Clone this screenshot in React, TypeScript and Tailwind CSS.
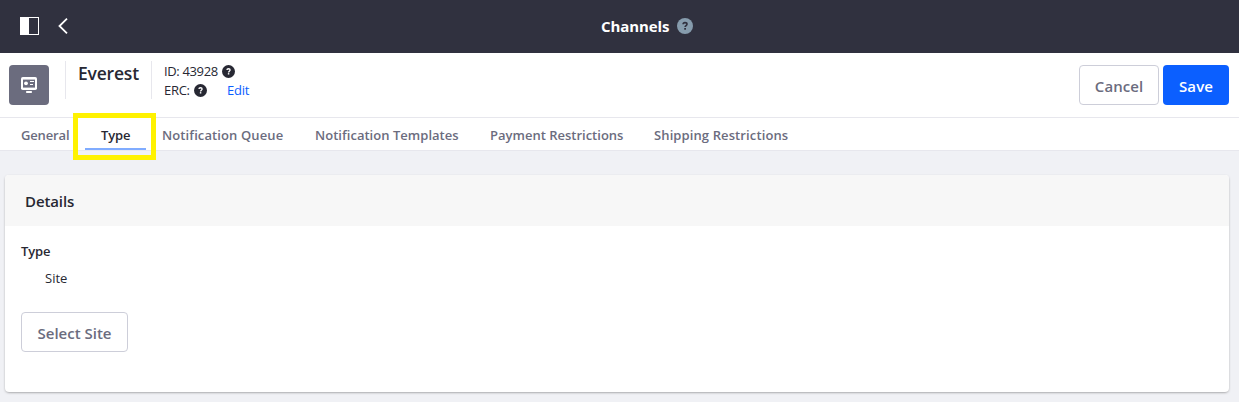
import React from "react";

type HelpProps = { className: string; mark: string };

function Help({ className, mark }: HelpProps) {
  return (
    <svg viewBox="0 0 16 16" className={className} aria-hidden="true">
      <circle cx="8" cy="8" r="8" fill="currentColor" />
      <path
        d="M6.1 6.3C6.1 5.2 6.9 4.6 8 4.6s2 .6 2 1.6c0 1.3-1.9 1.5-1.9 2.9"
        fill="none"
        stroke={mark}
        strokeWidth="1.6"
      />
      <rect x="7.2" y="10" width="1.8" height="1.7" fill={mark} />
    </svg>
  );
}

const tabs = [
  { label: "General", box: "w-[80px]", text: "tracking-[-0.15px]" },
  { label: "Type", box: "w-[61px]", text: "tracking-[-0.15px]" },
  { label: "Notification Queue", box: "w-[153px]", text: "tracking-[0.11px]" },
  { label: "Notification Templates", box: "w-[175px]", text: "tracking-[0.03px]" },
  { label: "Payment Restrictions", box: "w-[164px]", text: "" },
  { label: "Shipping Restrictions", box: "w-[166px]", text: "tracking-[0.11px]" },
];

export default function App() {
  return (
    <div className="flex h-[402px] w-[1239px] flex-col overflow-hidden bg-[#f0f1f5] font-['Open_Sans','Noto_Sans',sans-serif] text-[#272833]">
      <header className="grid h-[53px] shrink-0 grid-cols-[601px_auto_1fr] items-center bg-[#30313f] pb-[2px] text-white">
        <div className="flex items-center pl-5">
          <svg viewBox="0 0 19 18" className="h-[18px] w-[19px]" aria-hidden="true">
            <rect x="0.5" y="0.5" width="18" height="17" fill="none" stroke="white" />
            <rect width="9" height="18" fill="white" />
          </svg>
          <svg viewBox="0 0 10 16" className="ml-[19px] h-4 w-[10px]" aria-hidden="true">
            <path d="M9 .7 1.5 8 9 15.3" fill="none" stroke="white" strokeWidth="1.8" />
          </svg>
        </div>
        <h1 className="w-[76px] whitespace-nowrap text-[15px] leading-6 font-bold tracking-[-0.1px]">Channels</h1>
        <Help className="size-4 text-[#869cad]" mark="#30313f" />
      </header>

      <section className="flex h-[65px] shrink-0 border-b border-[#e7e7ed] bg-white pr-[10px] pl-[9px]">
        <div className="mt-3 flex size-10 items-center justify-center rounded bg-[#6b6c7e]">
          <svg viewBox="0 0 16 16" className="size-4" aria-hidden="true">
            <rect y="0" width="16" height="13" rx="1.8" fill="white" />
            <rect x="2" y="2.6" width="12" height="8" fill="#6b6c7e" />
            <rect x="5" y="14" width="6" height="2" rx=".8" fill="white" />
            <circle cx="5" cy="6.3" r="1.9" fill="white" />
            <path d="M9 4.5h4M9 7.5h3" stroke="white" strokeWidth="1" />
          </svg>
        </div>
        <div className="mt-2 ml-4 h-[38px] w-[87px] border-x border-[#e7e7ed] pl-3">
          <h2 className="whitespace-nowrap text-[17.5px] leading-[24px] font-semibold tracking-[-0.2px]">Everest</h2>
        </div>
        <div className="mt-[9px] ml-3 text-[13px] leading-[19px]">
          <div className="flex items-center">
            <span className="w-[58px] whitespace-nowrap tracking-[-0.35px]">ID: 43928</span>
            <Help className="size-[13px]" mark="#ffffff" />
          </div>
          <div className="flex items-center">
            <span className="w-[30px] whitespace-nowrap tracking-[-0.3px]">ERC:</span>
            <Help className="size-[13px]" mark="#ffffff" />
            <a className="ml-5 text-[#0b5fff] tracking-[-0.2px]">Edit</a>
          </div>
        </div>
        <div className="mt-3 ml-auto flex gap-1 text-[15px] font-semibold">
          <button className="h-10 w-20 rounded border border-[#cdced9] pt-0.5 tracking-[0.05px] text-[#6b6c7e]">Cancel</button>
          <button className="h-10 w-[66px] rounded bg-[#0b5fff] pt-0.5 tracking-[0.1px] text-white">Save</button>
        </div>
      </section>

      <nav className="relative flex h-[33px] shrink-0 border-b border-[#e7e7ed] bg-white pl-[5px] text-[13px] font-semibold text-[#6b6c7e]">
        {tabs.map((tab) => (
          <div
            key={tab.label}
            className={`${tab.box} ${tab.label === "Type" ? "border-b-2 border-[#80acff] text-[#272833]" : ""} h-8 pl-4 leading-[34px] whitespace-nowrap`}
          >
            <span className={tab.text}>{tab.label}</span>
          </div>
        ))}
        <div className="absolute top-[-5px] left-[73px] h-[47px] w-[83px] border-5 border-[#fff200]" />
      </nav>

      <main className="mt-6 ml-[5px] h-[217px] w-[1224px] shrink-0 overflow-hidden rounded bg-white shadow-[0_1px_3px_-1px_rgba(0,0,0,0.6)]">
        <h3 className="h-[51px] bg-[#f7f7f7] pl-5 text-[15px] leading-[53px] font-semibold tracking-[-0.1px]">Details</h3>
        <div className="pt-[15px] pl-4">
          <div className="text-[13px] leading-5 font-semibold tracking-[-0.15px]">Type</div>
          <div className="mt-[7px] pl-6 text-[13px] leading-5">Site</div>
          <button className="mt-6 h-10 w-[107px] rounded border border-[#cdced9] pt-0.5 text-[15px] font-semibold text-[#6b6c7e]">Select Site</button>
        </div>
      </main>
    </div>
  );
}
